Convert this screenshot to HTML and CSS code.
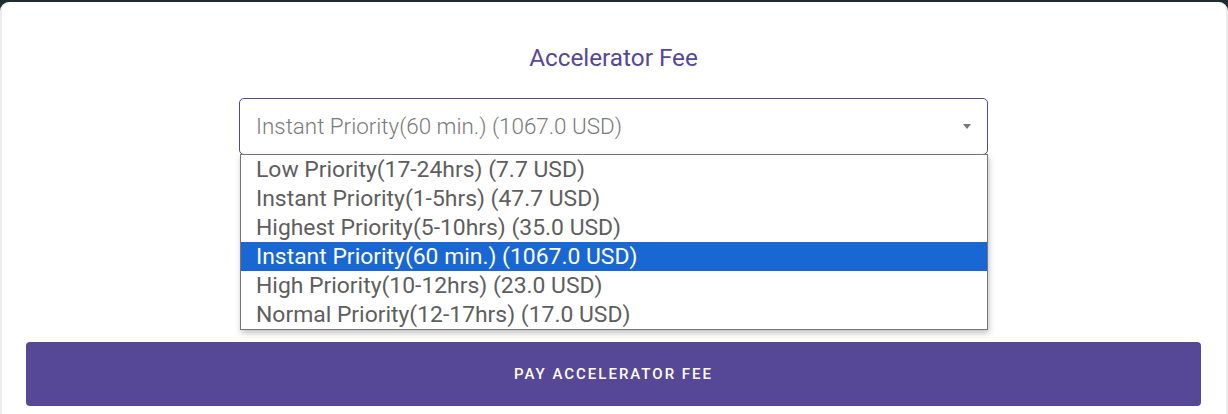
FILE: index.html
```html
<!DOCTYPE html>
<html>
<head>
<meta charset="utf-8">
<link rel="stylesheet" href="styles.css">
</head>
<body>
<div class="card">
  <h2 class="title">Accelerator Fee</h2>
  <div class="select-wrap">
    <div class="select">
      <span class="select-value">Instant Priority(60 min.) (1067.0 USD)</span>
      <span class="arrow"></span>
    </div>
    <ul class="listbox">
      <li class="option">Low Priority(17-24hrs) (7.7 USD)</li>
      <li class="option">Instant Priority(1-5hrs) (47.7 USD)</li>
      <li class="option">Highest Priority(5-10hrs) (35.0 USD)</li>
      <li class="option selected">Instant Priority(60 min.) (1067.0 USD)</li>
      <li class="option">High Priority(10-12hrs) (23.0 USD)</li>
      <li class="option">Normal Priority(12-17hrs) (17.0 USD)</li>
    </ul>
  </div>
  <button class="pay">PAY ACCELERATOR FEE</button>
</div>
</body>
</html>
```

FILE: styles.css
```css
html, body {
  margin: 0;
  padding: 0;
  height: 100%;
}
body {
  background: #1f2c32;
  font-family: Roboto, "Liberation Sans", sans-serif;
  overflow: hidden;
}
.card {
  box-sizing: border-box;
  margin-top: 2px;
  height: calc(100% - 2px);
  width: 1228px;
  background: #fff;
  border-left: 2px solid #ececec;
  border-right: 2px solid #ececec;
  border-radius: 9px 9px 0 0;
  padding: 43px 25px 0 24px;
  display: flex;
  flex-direction: column;
  align-items: center;
}
.title {
  margin: 0;
  font-size: 24.3px;
  font-weight: 400;
  line-height: 26px;
  color: #56479a;
}
.select-wrap {
  position: relative;
  margin-top: 27px;
  width: 749px;
}
.select {
  box-sizing: border-box;
  height: 57px;
  border: 1px solid #56479a;
  border-radius: 5px;
  display: flex;
  align-items: center;
  padding: 0 16px 0 16px;
  justify-content: space-between;
}
.select-value {
  font-size: 22.4px;
  font-weight: 300;
  color: #7a7a7a;
  position: relative;
  top: -1px;
}
.arrow {
  width: 0;
  height: 0;
  border-left: 4px solid transparent;
  border-right: 4px solid transparent;
  border-top: 5px solid #777;
  margin-right: 0;
}
.listbox {
  position: absolute;
  left: 1px;
  top: 56px;
  width: 748px;
  box-sizing: border-box;
  margin: 0;
  padding: 0;
  list-style: none;
  background: #fff;
  border: 1px solid #767676;
  box-shadow: 1px 3px 6px rgba(0,0,0,0.25);
}
.option {
  height: 29px;
  line-height: 29px;
  padding-left: 15px;
  font-size: 22.9px;
  color: #5e5e5e;
}
.option.selected {
  background: #1967d2;
  color: #fff;
}
.pay {
  margin-top: 187px;
  width: 100%;
  height: 64px;
  border: 0;
  border-radius: 4px;
  background: #564896;
  color: #fff;
  font-family: Roboto, "Liberation Sans", sans-serif;
  font-size: 15px;
  font-weight: 500;
  letter-spacing: 2px;
}
```
